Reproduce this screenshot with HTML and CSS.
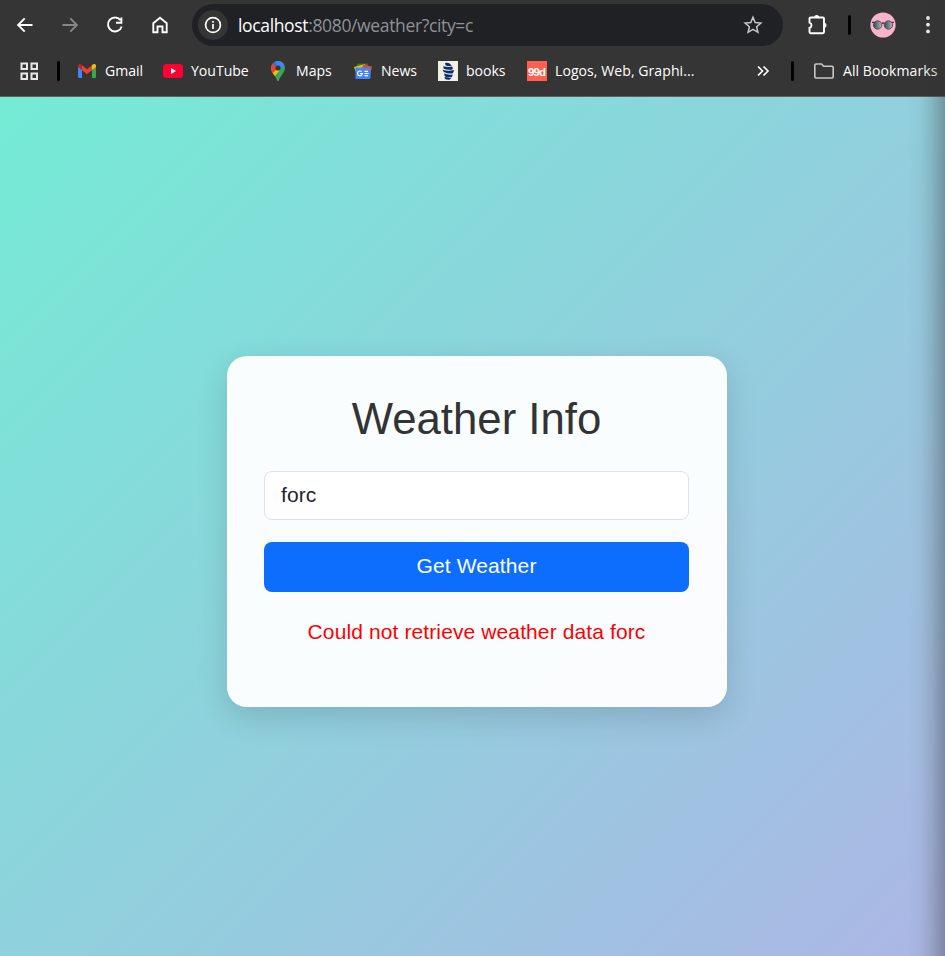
FILE: index.html
```html
<!DOCTYPE html>
<html lang="en">
<head>
<meta charset="utf-8">
<title>Weather Info</title>
<link rel="stylesheet" href="styles.css">
</head>
<body>
<div class="window">
<header class="chrome">
  <div class="toolbar">
    <nav class="nav">
      <svg class="ico" viewBox="0 0 20 20"><path d="M17.500 10H3.500M9.700 3.400L3.100 10l6.600 6.600"/></svg>
      <svg class="ico dim" viewBox="0 0 20 20"><path d="M2.500 10h14M10.300 3.400l6.600 6.600-6.600 6.600"/></svg>
      <svg class="ico" viewBox="0 0 20 20"><path d="M15.500 5.100A7 7 0 1 0 16.700 11.500M16.400 2.500v5.200h-5.400"/></svg>
      <svg class="ico" viewBox="0 0 20 20"><path d="M3.300 8.200L10 2.700l6.700 5.500v9h-4.200v-5.700h-5v5.700H3.300z"/></svg>
    </nav>
    <div class="address">
      <span class="info"><svg class="ico" viewBox="0 0 20 20"><circle cx="10" cy="10" r="7.400"/><path d="M10 9v5M10 6v1.700"/></svg></span>
      <span class="url"><b>localhost</b>:8080/weather?city=c</span>
      <svg class="ico star" viewBox="0 0 20 20"><path d="M10 2.200l2.200 5.300 5.700.5-4.300 3.700 1.300 5.600L10 14.300l-4.900 3 1.300-5.600L2.100 8l5.700-.5z"/></svg>
    </div>
    <svg class="ext" viewBox="0 0 22 22"><path d="M2.500 4.600c0-.7.4-1.100 1.100-1.100h12.200c.7 0 1.200.5 1.200 1.100v13.500c0 .7-.5 1.100-1.200 1.100H3.600c-.7 0-1.100-.5-1.100-1.100v-4.300a2.700 2.700 0 0 0 0-5.200z"/><path class="solid" d="M7.200 3.500a2.500 2.500 0 0 1 5 0zM17 8.700a2.500 2.500 0 0 1 0 5z"/></svg>
    <i class="sep small"></i>
    <svg class="avatar" viewBox="0 0 26 26"><defs><linearGradient id="lens" x1="0" x2="1"><stop stop-color="#34464a"/><stop offset="1" stop-color="#b0babb"/></linearGradient></defs><circle cx="13" cy="13" r="12.600" fill="#f9b4cd"/><path d="M2 10.300h8.500M15.500 10.300H24M11.500 11.500q1.500-1 3 0" fill="none" stroke="#433a41" stroke-width="1.300"/><g fill="url(#lens)" stroke="#4b474d" stroke-width=".8"><circle cx="7.600" cy="13" r="4.200"/><circle cx="18.400" cy="13" r="4.200"/></g></svg>
    <svg class="more" viewBox="0 0 6 20"><circle cx="3" cy="3" r="1.900"/><circle cx="3" cy="9.700" r="1.900"/><circle cx="3" cy="16.400" r="1.900"/></svg>
  </div>
  <div class="bookmarks">
    <svg class="apps" viewBox="0 0 20 20"><path d="M2.500 2.500h5.500v5.500H2.500zM12.500 2.500H18v5.500h-5.500zM2.500 12.500h5.500V18H2.500zM12.500 12.500H18V18h-5.500z"/></svg>
    <i class="sep"></i>
    <div class="mark gmail"><svg viewBox="0 0 20 20"><path fill="#4285f4" d="M1 5l4 3v9H2.200Q1 17 1 16z"/><path fill="#34a853" d="M15 8l4-3v11q0 1-1.200 1H15z"/><path fill="#ea4335" d="M4 3.600l6 4.600 6-4.600V8.500l-6 4.600-6-4.600z"/><path fill="#c5221f" d="M1 6V4.800C1 3 3 2.400 4.400 3.500L5 4v5z"/><path fill="#fbbc04" d="M15 9V4l.6-.5C17 2.400 19 3 19 4.800V6z"/></svg><span>Gmail</span></div>
    <div class="mark youtube"><svg viewBox="0 0 20 20"><rect y="3" width="20" height="14" rx="3.500" fill="#ff0033"/><path fill="#fff" d="M8 7v6l5-3z"/></svg><span>YouTube</span></div>
    <div class="mark maps"><svg viewBox="0 0 20 20"><defs><clipPath id="pin"><path d="M10 0a7 7 0 0 0-7 7c0 5 5 7.500 6 12.500q1 1 2 0c1-5 6-7.500 6-12.500a7 7 0 0 0-7-7z"/></clipPath></defs><g clip-path="url(#pin)"><path fill="#34a853" d="M0 0h20v20H0z"/><path fill="#fbbc04" d="M0 14l9-10 4 4-8 9z"/><path fill="#ea4335" d="M0 0h6l4 7-6 6-4-3z"/><path fill="#1a73e8" d="M4.500 2.500L10 7l3-4-4-3z"/><path fill="#4285f4" d="M7 0h10v4l-4.500 5L9 5z"/></g><circle cx="10" cy="7" r="2.600" fill="#353639"/></svg><span>Maps</span></div>
    <div class="mark news"><svg viewBox="0 0 20 20"><path fill="#188038" d="M4 2.500h11v8H4z"/><path fill="#fbbc04" d="M1 6l11-3 2 8-10 3z"/><path fill="#ea4335" d="M10 3.500l9 2-2 9-9-3z"/><rect x="2.500" y="6.500" width="15" height="11.500" rx="1.200" fill="#4285f4"/><path fill="none" stroke="#fff" stroke-width="1.200" d="M8.600 10.700a2.400 2.400 0 1 0 .7 1.800H7M11.500 10.300h3.500M11.500 12.500h4M11.500 14.600h3.500"/></svg><span>News</span></div>
    <div class="mark books"><svg viewBox="0 0 20 20"><path fill="#f1f0e4" d="M0 0h20v20H0z"/><path fill="#0b2d70" d="M7 2q3-.5 5 .8l1.700 1.900q-3 .8-6-.3zM5.200 5.300q5 1.200 8.800.2 1.400 1.200.5 2.900-5 .8-8.800-.7zM4.700 8.700q5 1.800 11 .2.700 1.900-1.200 3.600-5 .3-8.800-1.500zM6 12.500q4 1.600 8.700 1l-.8 2.700q-4 .4-7-.8zM6.700 16.100q3.200 1 6.800.8l-2 1.900q-3 .2-4.700-1z"/></svg><span>books</span></div>
    <div class="mark logos"><svg viewBox="0 0 20 20"><path fill="#fe5f50" d="M0 0h20v20H0z"/><text x="1" y="14.500" textLength="18" lengthAdjust="spacing" class="nine">99d</text></svg><span>Logos, Web, Graphi...</span></div>
    <svg class="chev" viewBox="0 0 14 14"><path d="M2 2.500L6.500 7 2 11.500M7.500 2.500L12 7l-4.500 4.500"/></svg>
    <i class="sep second"></i>
    <svg class="folder" viewBox="0 0 22 18"><path d="M3 2h5.500l2.200 2.300H19q1.200 0 1.200 1.200v9.300q0 1.200-1.200 1.200H3q-1.200 0-1.200-1.200V3.200Q1.800 2 3 2z"/></svg>
    <span class="all">All Bookmarks</span>
  </div>
</header>
<main class="page">
  <section class="card">
    <h1>Weather Info</h1>
    <input class="city" type="text" value="forc" aria-label="City">
    <button class="submit">Get Weather</button>
    <p class="error">Could not retrieve weather data forc</p>
  </section>
</main>
</div>
</body>
</html>
```

FILE: styles.css
```css
* { box-sizing: border-box; }
body { margin: 0; font-family: "Liberation Sans", Arial, sans-serif; }
.window { position: relative; width: 945px; height: 956px; overflow: hidden; display: flex; flex-direction: column; }
.window::after { content: ""; position: absolute; top: 0; right: 0; bottom: 0; width: 38px; pointer-events: none;
  background: linear-gradient(90deg, rgba(50,50,50,0), rgba(50,50,50,.04) 35%, rgba(50,50,50,.14) 62%, rgba(50,50,50,.36)); }
.chrome { height: 97px; background: #353535; border-bottom: 1px solid #606060; font-family: "Open Sans", "Noto Sans", sans-serif; color: #fff; flex: none; }
svg { display: block; flex: none; }
.toolbar { display: flex; align-items: center; height: 50px; }
.nav { display: flex; gap: 25px; padding-left: 14.5px; width: 192px; }
.ico { width: 20px; height: 20px; fill: none; stroke: #fff; stroke-width: 1.9; }
.dim { stroke: #878787; }
.address { display: flex; align-items: center; width: 591px; height: 42px; border-radius: 21px; background: #202124; padding: 0 20px 0 6px; }
.info { display: grid; place-items: center; width: 30px; height: 30px; border-radius: 50%; background: #353535; }
.info .ico { stroke-width: 1.7; }
.url { flex: 1; margin-left: 10px; font-size: 17.5px; white-space: nowrap; color: #8f9296; letter-spacing: -.35px; }
.url b { font-weight: 400; color: #fff; }
.star { stroke: #c7c7c7; stroke-width: 1.5; }
.ext { width: 22px; height: 22px; margin-left: 24px; fill: none; stroke: #fff; stroke-width: 1.9; }
.solid { fill: #fff; stroke: none; }
.sep { flex: none; width: 3px; height: 20px; border-radius: 2px; background: #000; margin-left: 18px; }
.small { margin-left: 19px; }
.avatar { width: 26px; height: 26px; margin-left: 19px; }
.more { width: 6px; height: 20px; margin-left: 29px; fill: #fff; }
.bookmarks { display: flex; align-items: center; height: 42px; font-size: 14.05px; white-space: nowrap; }
.bookmarks span { transform: translateY(-1px); }
.apps { width: 20px; height: 20px; margin-left: 19px; fill: none; stroke: #e8e8e8; stroke-width: 2; }
.mark { display: flex; align-items: center; gap: 8px; flex: none; }
.mark svg { width: 20px; height: 20px; }
.gmail { width: 86px; margin-left: 17px; }
.youtube { width: 105px; }
.maps, .news { width: 85px; }
.books { width: 89px; }
.logos { width: 229px; letter-spacing: .06px; }
.nine { font: 700 11.5px "Liberation Sans", sans-serif; fill: #fff; }
.chev { width: 14px; height: 14px; fill: none; stroke: #fff; stroke-width: 1.7; }
.second { margin-left: 21px; }
.folder { width: 22px; height: 18px; margin-left: 18.5px; fill: none; stroke: #c7c7c7; stroke-width: 1.6; }
.all { margin-left: 8.5px; letter-spacing: .06px; }
.page { flex: 1; display: flex; justify-content: center; align-items: center; padding: 10px 0 0 9px; background: linear-gradient(135deg, #74ebd5, #acb6e5); }
.card { width: 500px; height: 351px; padding: 35px 38px 0 37px; border-radius: 20px; background: rgba(255,255,255,.95); box-shadow: 0 10px 32px rgba(0,0,0,.14); text-align: center; }
h1 { margin: 0 0 24px; font-size: 43.75px; font-weight: 400; line-height: 56px; color: #333; }
.city { display: block; width: 100%; height: 49px; padding: 0 16px 2px; border: 1px solid #dee2e6; border-radius: 8px; background: #fff; font: 21px "Liberation Sans", Arial, sans-serif; letter-spacing: .1px; color: #212529; outline: 0; }
.submit { display: block; width: 100%; height: 50px; margin: 22px 0 24px; padding: 0 0 2px; border: 0; border-radius: 8px; background: #0d6efd; color: #fff; font: 21px "Liberation Sans", Arial, sans-serif; letter-spacing: .12px; }
.error { margin: 0; font-size: 21px; line-height: 32px; letter-spacing: .11px; color: #f00; }
```
